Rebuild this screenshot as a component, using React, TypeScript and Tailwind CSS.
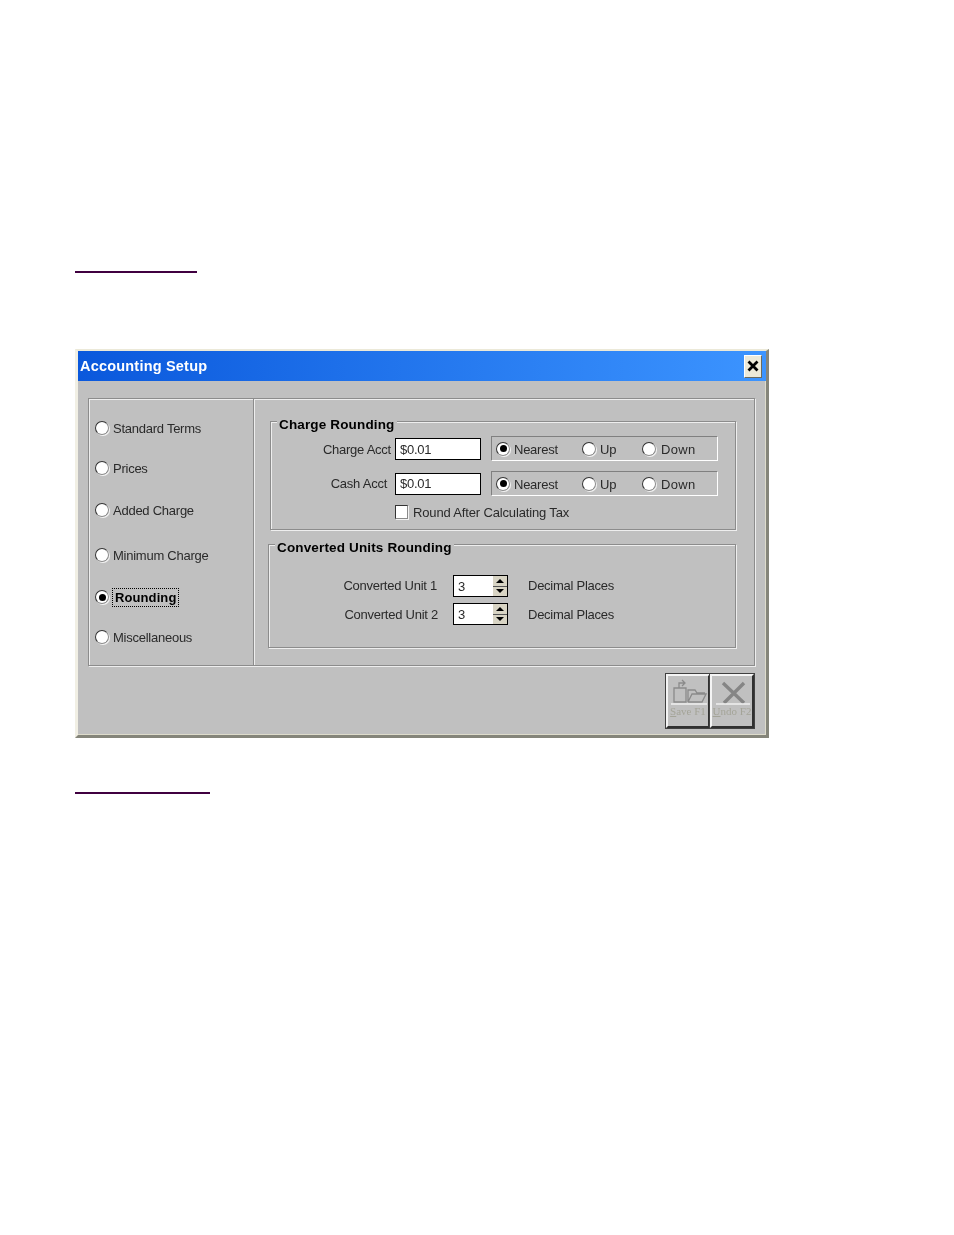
import React from 'react';

const Radio: React.FC<{ checked?: boolean }> = ({ checked }) => (
  <span className="flex h-[14px] w-[14px] shrink-0 items-center justify-center rounded-full border-[1.5px] border-t-[#333333] border-l-[#333333] border-r-[#8a8a8a] border-b-[#8a8a8a] bg-white shadow-[1px_1px_0_#f2f2f2]">
    {checked && <span className="h-[7px] w-[7px] rounded-full bg-black" />}
  </span>
);

const SideOption: React.FC<{ label: string; className: string; checked?: boolean }> = ({ label, className, checked }) => (
  <div className={`flex h-[20px] items-center ${className}`}>
    <Radio checked={checked} />
    {checked ? (
      <span className="ml-[3px] border border-dotted border-black px-[2px] font-bold leading-[17px] tracking-[0.1px] text-black">{label}</span>
    ) : (
      <span className="ml-[4px] pt-[2px]">{label}</span>
    )}
  </div>
);

const RoundingChoice: React.FC<{ className: string }> = ({ className }) => (
  <div className={`flex h-[25px] w-[227px] items-center border border-t-[#808080] border-l-[#808080] border-r-white border-b-white pl-[4px] ${className}`}>
    <Radio checked />
    <span className="ml-[4px] w-[68px] pt-[2px]">Nearest</span>
    <Radio />
    <span className="ml-[4px] w-[25px] pt-[2px]">Up</span>
    <span className="w-[17px]" />
    <Radio />
    <span className="ml-[5px] pt-[2px] tracking-[0.3px]">Down</span>
  </div>
);

const Spinner: React.FC = () => (
  <div className="flex h-[22px] w-[55px] border border-black bg-white">
    <span className="flex-1 pl-[4px] pt-[2px] leading-[18px]">3</span>
    <div className="flex w-[14px] flex-col bg-[#d8d4c4]">
      <div className="flex flex-1 items-center justify-center border-b border-[#555]">
        <span className="h-0 w-0 border-x-[4px] border-b-[4px] border-x-transparent border-b-black" />
      </div>
      <div className="flex flex-1 items-center justify-center">
        <span className="h-0 w-0 border-x-[4px] border-t-[4px] border-x-transparent border-t-black" />
      </div>
    </div>
  </div>
);

const Legend: React.FC<{ label: string; className: string }> = ({ label, className }) => (
  <span className={`absolute bg-[#c0c0c0] px-[2px] text-[13.5px] font-bold leading-[16px] tracking-[0.15px] text-black ${className}`}>
    {label}
  </span>
);

const ToolButton: React.FC<{ children: React.ReactNode; hotkey: string; label: string }> = ({ children, hotkey, label }) => (
  <div className="flex h-[54px] w-[44px] flex-col items-center border-2 border-t-[#f4f4f4] border-l-[#f4f4f4] border-r-[#303030] border-b-[#303030] pt-[1px] outline outline-1 outline-[#404040]">
    {children}
    <span className="whitespace-nowrap font-['Liberation_Serif',serif] text-[11px] leading-[12px] tracking-normal text-[#a4a498]">
      <u>{hotkey}</u>
      {label}
    </span>
  </div>
);

export default function App() {
  return (
    <div className="h-[1235px] w-[954px] bg-white pl-[75px] pt-[271px] font-['Liberation_Sans',Arial,sans-serif] text-[13px] tracking-[-0.25px] text-[#2a2a2a]">
      <div className="h-[2px] w-[122px] bg-[#400040]" />

      <div className="mt-[76px] h-[389px] w-[694px] border-[3px] border-t-2 border-t-[#ece9d8] border-l-[#f1efe4] border-r-[#85857a] border-b-[#85857a] bg-[#c0c0c0] shadow-[inset_-1px_-1px_0_#dedccc] blur-[0.3px]">
        <div className="flex h-[30px] items-center justify-between bg-gradient-to-r from-[#0a58dc] to-[#3c94ff] pl-[2px] pr-[4px]">
          <span className="pt-[1px] text-[14.5px] font-bold tracking-[0.2px] text-white">Accounting Setup</span>
          <div className="flex h-[23px] w-[18px] items-center justify-center border border-t-white border-l-white border-r-[#6a6a5e] border-b-[#6a6a5e] bg-[#ece9d8]">
            <svg width="12" height="12" viewBox="0 0 12 12" fill="none">
              <path d="M1.5 1.5 10.5 10.5M10.5 1.5 1.5 10.5" stroke="#000" strokeWidth="2.8" />
            </svg>
          </div>
        </div>

        <div className="ml-[10px] mt-[17px] flex h-[268px] w-[667px] border border-[#8c8c8c] shadow-[inset_1px_1px_0_#eeeeee,1px_1px_0_#eeeeee]">
          <div className="w-[165px] border-r border-r-[#8c8c8c] pl-[6px] shadow-[1px_0_0_#eeeeee]">
            <SideOption label="Standard Terms" className="mt-[19px]" />
            <SideOption label="Prices" className="mt-[20px]" />
            <SideOption label="Added Charge" className="mt-[22px]" />
            <SideOption label="Minimum Charge" className="mt-[25px]" />
            <SideOption label="Rounding" className="mt-[22px]" checked />
            <SideOption label="Miscellaneous" className="mt-[20px]" />
          </div>

          <div className="flex-1 pl-[16px] pt-[22px]">
            <div className="relative h-[109px] w-[466px] border border-[#8c8c8c] shadow-[inset_1px_1px_0_#eeeeee,1px_1px_0_#eeeeee]">
              <Legend label="Charge Rounding" className="left-[6px] top-[-5px]" />
              <div className="flex items-center pt-[14px]">
                <span className="w-[124px] pr-[4px] pt-[2px] text-right">Charge Acct</span>
                <div className="flex h-[22px] w-[86px] items-center border border-black bg-white pl-[4px] pt-[2px]">$0.01</div>
                <RoundingChoice className="ml-[10px]" />
              </div>
              <div className="mt-[10px] flex items-center">
                <span className="w-[124px] pr-[8px] text-right">Cash Acct</span>
                <div className="flex h-[22px] w-[86px] items-center border border-black bg-white pl-[4px]">$0.01</div>
                <RoundingChoice className="ml-[10px]" />
              </div>
              <div className="ml-[124px] mt-[6px] flex items-center gap-[5px]">
                <span className="h-[14px] w-[13px] border border-t-[#333333] border-l-[#333333] border-r-[#8a8a8a] border-b-[#8a8a8a] bg-white shadow-[1px_1px_0_#f2f2f2]" />
                <span className="pt-[1px] tracking-[-0.15px]">Round After Calculating Tax</span>
              </div>
            </div>

            <div className="relative -ml-[2px] mt-[14px] h-[104px] w-[468px] border border-[#8c8c8c] shadow-[inset_1px_1px_0_#eeeeee,1px_1px_0_#eeeeee]">
              <Legend label="Converted Units Rounding" className="left-[6px] top-[-5px]" />
              <div className="flex items-center pt-[30px]">
                <span className="w-[169px] pr-[1px] text-right">Converted Unit 1</span>
                <span className="w-[15px]" />
                <Spinner />
                <span className="ml-[20px]">Decimal Places</span>
              </div>
              <div className="mt-[6px] flex items-center">
                <span className="w-[169px] pt-[2px] text-right">Converted Unit 2</span>
                <span className="w-[15px]" />
                <Spinner />
                <span className="ml-[20px] pt-[2px]">Decimal Places</span>
              </div>
            </div>
          </div>
        </div>

        <div className="ml-[588px] mt-[8px] flex">
          <ToolButton hotkey="S" label="ave F1">
            <svg width="38" height="28" viewBox="0 0 38 28" fill="none" stroke="#8a8a8a" strokeWidth="1.3">
              <path d="M5 11h12v14H5zM10 11V6h5M13 3l3 3-3 3" />
              <path d="M19 25V13h7l2 3h8M19 25h14l4-8H23l-4 8" />
              <path d="M2 27h36" stroke="#f0f0f0" strokeWidth="1.4" />
            </svg>
          </ToolButton>
          <ToolButton hotkey="U" label="ndo F2">
            <svg width="36" height="28" viewBox="0 0 36 28" fill="none">
              <path d="M9 6 30 26M30 6 10 26" stroke="#858585" strokeWidth="3.4" />
              <path d="M2 27h34" stroke="#f0f0f0" strokeWidth="1.4" />
            </svg>
          </ToolButton>
        </div>
      </div>

      <div className="mt-[54px] h-[2px] w-[135px] bg-[#400040]" />
    </div>
  );
}
